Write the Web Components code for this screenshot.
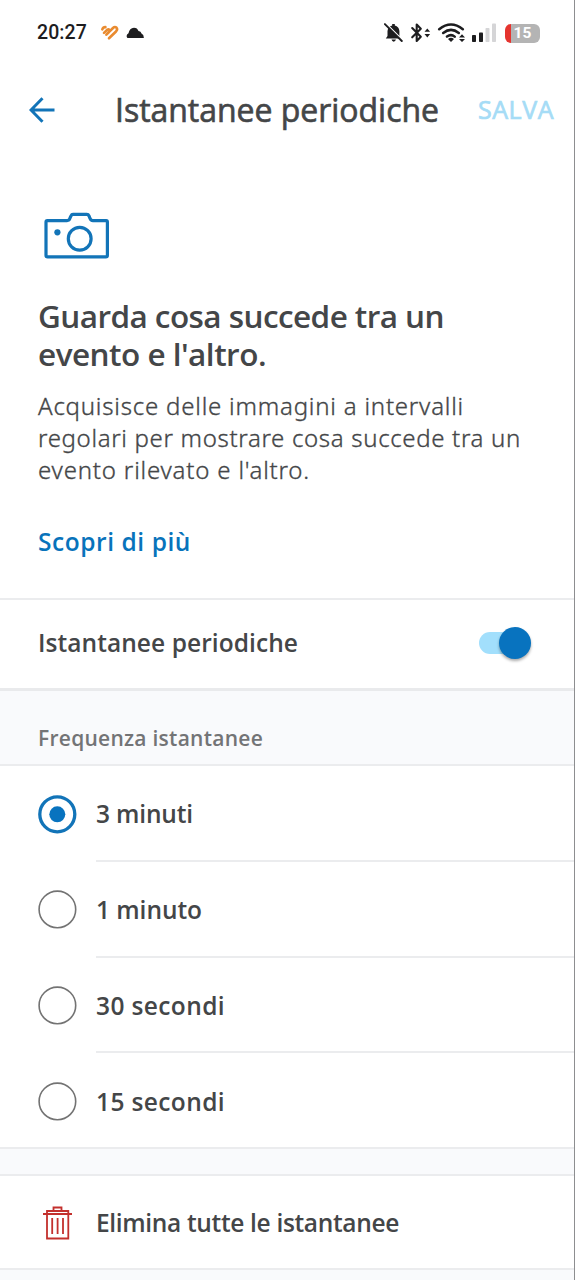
<!DOCTYPE html>
<html lang="it"><head><meta charset="utf-8"><title>Istantanee periodiche</title>
<style>html,body{margin:0;background:#fff}body{width:575px;height:1280px;overflow:hidden;font-family:"Open Sans","Noto Sans",sans-serif;color:#444648}</style></head>
<body><snapshot-page></snapshot-page>
<script>
const define=(name,html,init)=>{const t=document.createElement('template');t.innerHTML=html;
customElements.define(name,class extends HTMLElement{constructor(){super();this.attachShadow({mode:'open'}).append(t.content.cloneNode(true));}
connectedCallback(){if(init)init(this,this.shadowRoot)}})};

/* A line of text whose tracking is adjusted so that it takes the given width. */
define('fit-text',`<style>:host{display:block;white-space:nowrap}span{display:block;width:max-content}</style><span><slot></slot></span>`,(h,r)=>{
 const s=r.querySelector('span'),n=h.textContent.length;
 const w=s.getBoundingClientRect().width;
 if(w)s.style.letterSpacing=((+h.getAttribute('width')-w)/n)+'px';
});

define('status-bar',`<style>:host{display:flex;height:66px;box-sizing:border-box;padding:0 34px 0 37px;align-items:center;color:#1d1d1f}
.time{font:500 19.5px/24px Roboto,sans-serif}svg{display:block;flex:none}.sp{flex:1}
.bat{width:35px;height:19px;border-radius:6px;background:linear-gradient(90deg,#e5342f 6px,#b4b4b4 6px);color:#fff;font:700 15.5px/19px Roboto,sans-serif;text-align:center}</style>
<fit-text class="time" width="50">20:27</fit-text>
<svg style="margin-left:13px" width="20" height="18" viewBox="0 0 20 18" fill="none" stroke="#e98b30" stroke-linecap="round" stroke-linejoin="round" stroke-width="2.6"><path d="M2.3 5.4Q3.2 3 5.4 3.1M4 8.9L7.4 5.6Q8.6 4.8 9.4 5.9Q10 7 9 8L6.4 10.7M9 14.3L16 7.5Q18 5.2 16.4 3.6Q14.8 2.2 13 4L9.4 7.6"/></svg>
<svg style="margin-left:6px" width="18" height="12" viewBox="0 0 18 12" fill="#1d1d1f"><path d="M1.4 11Q-.6 8.2 2.5 6.3Q3.5 1 8 .7Q11.4.8 12.5 4Q15 4.2 15.5 6.5Q18 7.8 17.8 11Z"/></svg>
<span class="sp"></span>
<svg viewBox="384 22 121 22" style="width:121px;height:22px" fill="#1d1d1f">
<path d="M385.8 38.5L387.5 36V31Q388 26.5 392.2 25.6V24H394.8V25.6Q399.1 26.7 399.4 31V36L401 38.5ZM391.5 39.6H396Q395.3 41.7 393.7 41.7Q392.1 41.7 391.5 39.6Z"/><path d="M386.5 24L403 40.5" stroke="#fff" stroke-width="1.6"/><path d="M384.9 24.1L401.8 41" stroke="#1d1d1f" stroke-width="1.9" stroke-linecap="round"/>
<path d="M412.2 28L420.8 36.8L416.7 41V24.5L420.8 28.7L412.2 37.3" fill="none" stroke="#1d1d1f" stroke-width="2.1" stroke-linejoin="round" stroke-linecap="round"/>
<path d="M424.5 31.8L427.3 28.4L430.1 31.8ZM424.5 34L427.3 37.4L430.1 34Z"/>
<g fill="none" stroke="#1d1d1f" stroke-width="2.5" stroke-linecap="round"><path d="M439.2 29.2Q451 19.7 462.8 29.2M443.2 33Q451 26.8 458.8 33M447 36.6Q451 33.6 454.7 36.6"/></g><path d="M448 38.9Q451 36.8 454 38.9L451 42Z"/>
<path d="M459 37.4L462 34.2L465 37.4ZM459 38.9L462 42.1L465 38.9Z"/>
<rect x="472" y="35" width="4" height="7" rx=".8"/><rect x="479" y="32.5" width="4" height="9.5" rx=".8"/><g fill="#d5d5d7"><rect x="485.5" y="28" width="4" height="14" rx=".8"/><rect x="492" y="23.5" width="4" height="18.5" rx=".8"/></g></svg>
<div class="bat">15</div>`);

define('top-bar',`<style>:host{display:flex;height:87px;align-items:center;padding:0 0 0 29px}
svg{display:block;flex:none;margin-top:1px}.t{font-size:32px;-webkit-text-stroke:.65px currentColor;line-height:44px;margin-left:60px;width:325px}.s{font-size:25px;-webkit-text-stroke:.7px currentColor;color:#a5dcf6;margin:-1px 0 0 38px}</style>
<svg width="26" height="26" viewBox="0 0 26 26" fill="none" stroke="#1274b8" stroke-width="3"><path d="M25.5 13H2.5M13.5 1.3L2 13L13.5 24.7"/></svg>
<fit-text class="t" width="324">Istantanee periodiche</fit-text><fit-text class="s" width="76">SALVA</fit-text>`);

define('intro-block',`<style>:host{display:block;height:445px;box-sizing:border-box;padding:59px 0 0 38px}svg{display:block;margin-left:6px}
.h{font-size:31.5px;font-weight:600;line-height:38.4px}.h1{margin-top:38px}.p{font-family:"Noto Sans",sans-serif;font-size:24px;font-weight:300;-webkit-text-stroke:.35px currentColor;line-height:32px}.p1{margin-top:16px}
.a{font-size:24.5px;font-weight:600;line-height:32px;color:#0873bb;margin-top:40px}</style>
<svg width="66" height="47" viewBox="0 0 66 47" fill="none" stroke="#1274b8" stroke-width="3.2" stroke-linejoin="round"><path d="M3.3 8.6H23Q25.4 8.6 26 6L27 3.8Q27.6 2.4 29 2.4H42.8Q44.4 2.4 45 3.8L46 6.3Q46.7 8.6 49 8.6H62.2Q63.4 8.6 63.4 10V43.2Q63.4 44.8 61.8 44.8H3.6Q2 44.8 2 43.2V10Q2 8.6 3.3 8.6Z"/><circle cx="35.7" cy="26.7" r="11.4"/><circle cx="13.4" cy="20.3" r="3.1" fill="#1274b8" stroke="none"/></svg>
<fit-text class="h h1" width="406">Guarda cosa succede tra un</fit-text><fit-text class="h" width="228">evento e l'altro.</fit-text>
<fit-text class="p p1" width="426">Acquisisce delle immagini a intervalli</fit-text><fit-text class="p" width="483">regolari per mostrare cosa succede tra un</fit-text><fit-text class="p" width="272">evento rilevato e l'altro.</fit-text>
<fit-text class="a" width="153">Scopri di più</fit-text>`);

define('toggle-row',`<style>:host{display:flex;height:90px;align-items:center;justify-content:space-between;padding:0 43px 3px 38px;border-top:2px solid #ebecee;box-sizing:border-box;font-size:24.5px;font-weight:600}
.sw{width:52px;height:32px;display:flex;align-items:center;justify-content:flex-end}
.track{width:20px;height:22px;background:#a2dffc;border-radius:11px 0 0 11px;padding-right:16px;margin-right:-16px}.k{width:32px;height:32px;border-radius:50%;background:#0873bf;box-shadow:0 2px 3px #0005;position:relative}</style>
<slot></slot><div class="sw"><div class="track"></div><div class="k"></div></div>`);

define('section-label',`<style>:host{display:flex;align-items:center;height:78px;box-sizing:border-box;border-top:3px solid #e9eaec;border-bottom:2px solid #ebecee;padding:20px 0 0 38px;background:#f9fafc;font-size:21px;font-weight:600;color:#737476}</style><slot></slot>`);

define('radio-row',`<style>:host{display:flex;height:95.8px;box-sizing:border-box;padding-left:38px;font-size:24.5px;font-weight:600}
.r{width:39px;height:39px;margin-top:28.7px;flex:none}.c{flex:1;margin-left:19px;padding-top:1.5px;border-bottom:2px solid #ebecee;display:flex;align-items:center;box-sizing:border-box}:host([last]) .c{border-color:transparent}
.on{display:none}:host([checked]) .on{display:block}:host([checked]) .off{display:none}</style>
<svg class="r" viewBox="0 0 39 39"><g class="on"><circle cx="19.3" cy="19.3" r="17.5" fill="none" stroke="#1274b8" stroke-width="3.3"/><circle cx="19.3" cy="19.3" r="8" fill="#0873bf"/></g><circle class="off" cx="19.4" cy="19.4" r="18.3" fill="none" stroke="#737373" stroke-width="1.6"/></svg><div class="c"><slot></slot></div>`);

define('spacer-band',`<style>:host{display:block;height:29px;margin-top:-2.2px;box-sizing:border-box;background:#f9fafc;border-top:2px solid #ebecee;border-bottom:2px solid #ebecee}</style>`);

define('delete-row',`<style>:host{display:flex;height:94.5px;box-sizing:border-box;padding-bottom:1px;align-items:center;padding-left:43px;font-size:24.5px;font-weight:600}svg{display:block;margin-right:24px}</style>
<svg width="29" height="34" viewBox="0 0 29 34" fill="none" stroke="#c3302d" stroke-width="1.8"><path d="M0 8H29M4 8V5H25.3V8M10.5 5V1.5H18.5V5M4 8V32.5H25.3V8M9.2 12V28M14.6 12V28M20 12V28"/></svg><slot></slot>`);

define('snapshot-page',`<style>:host{display:block;box-sizing:border-box;width:575px;height:1280px;border-right:1px solid #8d8e90;overflow:hidden;background:#fff}</style>
<status-bar></status-bar><top-bar></top-bar><intro-block></intro-block>
<toggle-row><fit-text width="260">Istantanee periodiche</fit-text></toggle-row>
<section-label><fit-text width="225">Frequenza istantanee</fit-text></section-label>
<radio-row checked><fit-text width="97">3 minuti</fit-text></radio-row>
<radio-row><fit-text width="106">1 minuto</fit-text></radio-row>
<radio-row><fit-text width="129">30 secondi</fit-text></radio-row>
<radio-row last><fit-text width="129">15 secondi</fit-text></radio-row>
<spacer-band></spacer-band><delete-row><fit-text width="303">Elimina tutte le istantanee</fit-text></delete-row><spacer-band></spacer-band>`);
</script></body></html>
